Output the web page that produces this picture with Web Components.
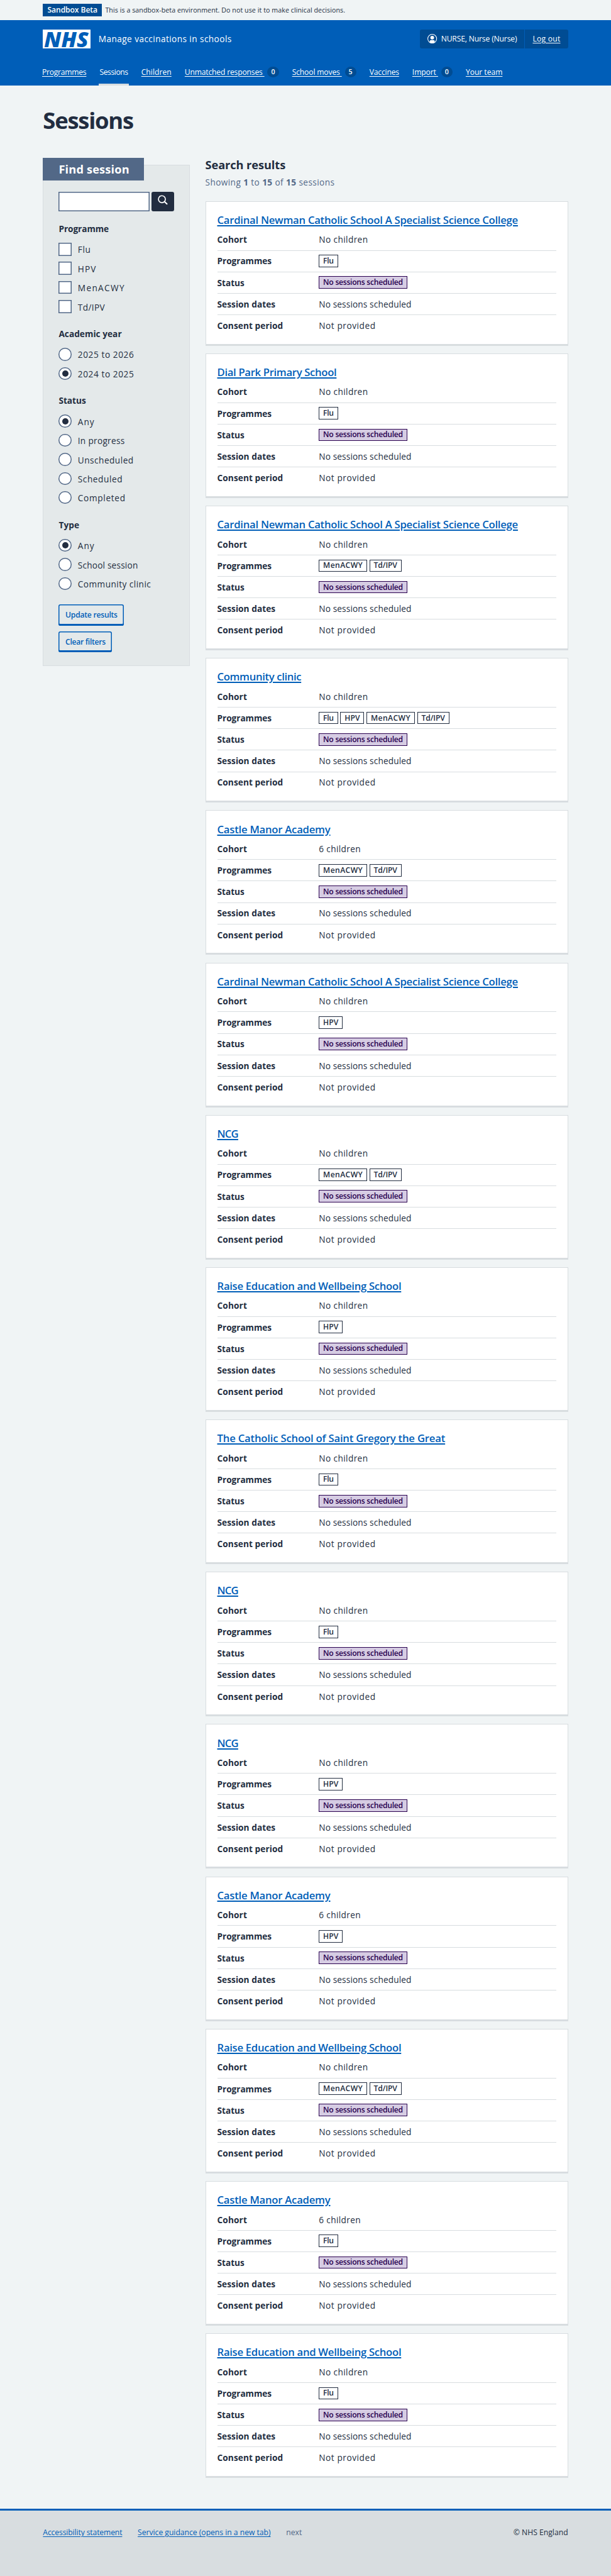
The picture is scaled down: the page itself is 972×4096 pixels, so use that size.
<!DOCTYPE html>
<html lang="en">
<head>
<meta charset="utf-8">
<title>Sessions – Manage vaccinations in schools</title>
<style>
/* 1rem is ten design pixels */
html{font-size:7.59375px;background:#d8dde0}
body{margin:0;background:#f0f4f5;color:#222d40;font-family:"Open Sans","Noto Sans",sans-serif;font-size:1.8rem;font-weight:500}
</style>
</head>
<body>
<sessions-page></sessions-page>
<script>
const UNIT = 0.759375;
const define = (name, css, html, setup) => customElements.define(name, class extends HTMLElement {
  connectedCallback() {
    if (this.shadowRoot) return;
    const t = document.createElement('template');
    t.innerHTML = `<style>*{box-sizing:border-box}a{color:inherit}b,h1,h2,h3{font-weight:700}${css}</style>` + (typeof html === 'function' ? html(this) : html);
    this.attachShadow({ mode: 'open' }).append(t.content.cloneNode(true));
    if (setup) setup(this);
  }
});

/* A run of text tracked so that it spans its design width */
define('text-run', ':host{display:inline-block;white-space:pre;text-decoration:inherit}span{display:inline-block;text-decoration:inherit;text-underline-offset:inherit}', '<span><slot></slot></span>', el => {
  const span = el.shadowRoot.querySelector('span');
  const target = el.getAttribute('w') * UNIT;
  span.style.letterSpacing = (target - span.getBoundingClientRect().width) / el.textContent.length + 'px';
});

define('env-banner', `
:host{display:block;height:4.2rem;padding:.8rem 9rem 0}
div{display:flex;align-items:baseline;line-height:2.6rem}
b{background:#004c93;color:#fff;font-size:1.6rem;font-weight:600;width:12.3rem;padding-left:.95rem;height:2.6rem}
p{margin:0 0 0 .75rem;font-size:1.4rem}`,
`<div><b><text-run w="104.5">Sandbox Beta</text-run></b><p><text-run w="502.5">This is a sandbox-beta environment. Do not use it to make clinical decisions.</text-run></p></div>`);

define('nhs-logo', `:host{display:flex;align-items:center;width:10rem;height:4rem;background:#fff;color:#005eb8;font:italic 800 4.5rem/6.2rem "Open Sans",sans-serif;padding-left:.25rem;box-sizing:border-box}
text-run{margin-top:-.2rem}`, `<text-run w="93">NHS</text-run>`);

define('account-box', `
:host{display:flex;width:31rem;height:4rem;background:#004c93;border-radius:.4rem;font-size:1.6rem;line-height:4rem;color:#fff}
.u{width:22rem;display:flex;padding-left:1.6rem;border-right:1px solid #005eb8}
svg{width:2rem;height:2rem;margin:.9rem .8rem 0 0}
.o{padding-left:1.6rem;text-decoration:underline;text-underline-offset:.25rem}`,
`<div class="u"><svg viewBox="0 0 20 20"><clipPath id="c"><circle cx="10" cy="10" r="9.5"/></clipPath><circle cx="10" cy="10" r="9.3" fill="none" stroke="#fff" stroke-width="1.4"/><circle cx="10" cy="7.7" r="3.9" fill="#fff"/><path clip-path="url(#c)" fill="#fff" d="M4.8 20v-4.5c0-1.7 1.2-2.8 2.9-2.8h4.6c1.7 0 2.9 1.1 2.9 2.8V20z"/></svg><text-run w="159">NURSE, Nurse (Nurse)</text-run></div><div class="o"><text-run w="58">Log out</text-run></div>`);

define('nav-item', `
:host{display:flex;align-items:center;height:5.6rem;position:relative}
a{text-decoration:underline;text-underline-offset:.22rem;line-height:2.6rem}
:host([current]) a{text-decoration:none}
:host([current])::after{content:"";position:absolute;left:-.18rem;right:-.16rem;bottom:0;height:.4rem;background:#d8dde0}
b{margin-left:.63rem;width:2.4rem;height:2.2rem;border-radius:50%;background:#004c93;font-size:1.4rem;font-weight:600;line-height:2.3rem;text-align:center}`,
el => `<a><text-run w="${el.getAttribute('w')}">${el.getAttribute('label')}${el.hasAttribute('count') ? ' ' : ''}</text-run></a>${el.hasAttribute('count') ? `<b>${el.getAttribute('count')}</b>` : ''}`);

define('site-header', `
:host{display:block;background:#005eb8;color:#fff;height:13.7rem;padding:2rem 9rem 0}
.top{display:flex;height:4rem;line-height:3.9rem}
.name{margin-left:1.65rem;flex:1}
nav{display:flex;gap:2.77rem;margin:2.1rem 0 0 -.18rem;font-size:1.6rem}`,
`<div class="top"><nhs-logo></nhs-logo><div class="name"><text-run w="279">Manage vaccinations in schools</text-run></div><account-box></account-box></div>
<nav><nav-item label="Programmes" w="92.7"></nav-item><nav-item label="Sessions" w="59.6" current></nav-item><nav-item label="Children" w="63.3"></nav-item><nav-item label="Unmatched responses" w="167" count="0"></nav-item><nav-item label="School moves" w="104.1" count="5"></nav-item><nav-item label="Vaccines" w="62"></nav-item><nav-item label="Import" w="54" count="0"></nav-item><nav-item label="Your team" w="77"></nav-item></nav>`);

define('choice-item', `
:host{display:flex;align-items:center;height:4rem}
i{width:2.7rem;height:2.7rem;margin:0 1.3rem 0 0;background:#fff;box-shadow:inset 0 0 0 .2rem #526887;display:grid;place-items:center}
:host([radio]) i{border-radius:50%}
:host([checked]) i::after{content:"";width:1.35rem;height:1.35rem;border-radius:50%;background:#222d40}
::slotted(*){margin-top:.15rem}`,
`<i></i><slot></slot>`);

define('choice-group', `:host{display:block;margin-top:2.27rem}h3{margin:0 0 .93rem;font-size:1.8rem;line-height:2.8rem}`,
el => `<h3><text-run w="${el.getAttribute('w')}">${el.getAttribute('label')}</text-run></h3><slot></slot>`);

define('outline-button', `:host{display:block;margin-bottom:1.2rem}
button{display:block;height:4.4rem;font-family:inherit;font-size:1.6rem;font-weight:600;color:#005eb8;background:none;border:0;border-radius:.4rem;box-shadow:inset 0 0 0 .2rem #005eb8,inset 0 -.4rem 0 #005eb8;padding:0 1.4rem .1rem;text-align:left}`,
`<button><slot></slot></button>`);

define('filter-panel', `
:host{display:block;box-sizing:border-box;width:30.8rem;height:105rem;margin-top:1.5rem;border:1px solid #d8dde0;background:#e4e9ea;padding-left:3.17rem}
h2{margin:calc(-1.5rem - 1px) 0 2.4rem calc(-3.17rem - 1px);width:21.2rem;height:4.8rem;line-height:4.8rem;padding-left:3.3rem;background:#526887;color:#fff;font-size:2.4rem}
.s{display:flex;gap:.4rem;height:4rem}
.s i{width:19rem;background:#fff;box-shadow:inset 0 0 0 .2rem #526887}
.s button{width:4.8rem;padding:0;border:0;border-radius:.4rem;background:#222d40;display:block}
svg{display:block;width:2.1rem;height:2.1rem;margin:-.55rem 0 0 1.3rem}
.b{margin-top:2.4rem}`,
() => {
  const item = (label, w, a) => `<choice-item ${a}><text-run w="${w}">${label}</text-run></choice-item>`;
  return `<h2><text-run w="148">Find session</text-run></h2>
<div class="s"><i></i><button><svg viewBox="0 0 21 21" fill="none" stroke="#fff" stroke-width="2.2"><circle cx="8.7" cy="8.9" r="7.3"/><path stroke-width="2.8" stroke-linecap="round" d="M14.2 14.1l4.9 4.6"/></svg></button></div>
<choice-group label="Programme" w="105">${item('Flu', 27.5, '')}${item('HPV', 39, '')}${item('MenACWY', 99, '')}${item('Td/IPV', 57, '')}</choice-group>
<choice-group label="Academic year" w="132">${item('2025 to 2026', 118, 'radio')}${item('2024 to 2025', 118, 'radio checked')}</choice-group>
<choice-group label="Status" w="57">${item('Any', 35.5, 'radio checked')}${item('In progress', 98.5, 'radio')}${item('Unscheduled', 117, 'radio')}${item('Scheduled', 94, 'radio')}${item('Completed', 100, 'radio')}</choice-group>
<choice-group label="Type" w="43">${item('Any', 35.5, 'radio checked')}${item('School session', 126, 'radio')}${item('Community clinic', 153.5, 'radio')}</choice-group>
<div class="b"><outline-button><text-run w="109">Update results</text-run></outline-button><outline-button><text-run w="84">Clear filters</text-run></outline-button></div>`;
});

define('tag-label', `:host{display:inline-flex;box-sizing:border-box;height:2.6rem;border:1px solid #222d40;font-size:1.6rem;font-weight:600;align-items:center;justify-content:center;width:var(--w);line-height:2.4rem}
:host([purple]){background:#d6cce3;color:#29004f;border-color:#29004f}`, '<slot></slot>',
el => el.style.setProperty('--w', el.getAttribute('w') / 10 + 'rem'));

define('summary-row', `:host{display:flex;align-items:center;box-sizing:border-box;height:4.5rem;border-bottom:1px solid #d8dde0;line-height:2.8rem}
:host([last]){border-bottom-color:transparent}
b{width:21.3rem}div{display:flex;gap:.5rem}`,
el => `<b><text-run w="${el.getAttribute('w')}">${el.getAttribute('label')}</text-run></b><div><slot></slot></div>`);

const tagWidths = { 'Flu': 40, 'HPV': 50, 'MenACWY': 101, 'Td/IPV': 67 };
define('session-card', `
:host{display:block;box-sizing:border-box;height:30.293rem;margin-bottom:1.6rem;background:#fff;border:1px solid #d8dde0;border-bottom-width:3px;padding:2.39rem 2.37rem 0}
h3{margin:0 0 .36rem;font-size:2.2rem;font-weight:600;line-height:3rem;color:#005eb8}
a{text-decoration:underline 1.5px;text-underline-offset:.24rem}`,
el => {
  const cohort = el.getAttribute('cohort');
  const tags = el.getAttribute('programmes').split(',').map(p => `<tag-label w="${tagWidths[p]}"><text-run w="${tagWidths[p] - 18}">${p}</text-run></tag-label>`).join('');
  return `<h3><a><text-run w="${el.getAttribute('w')}">${el.getAttribute('name')}</text-run></a></h3>
<summary-row label="Cohort" w="62.5"><text-run w="${cohort[0] === 'N' ? 103 : 88}">${cohort}</text-run></summary-row>
<summary-row label="Programmes" w="114">${tags}</summary-row>
<summary-row label="Status" w="57"><tag-label purple w="185"><text-run w="167">No sessions scheduled</text-run></tag-label></summary-row>
<summary-row label="Session dates" w="122"><text-run w="194">No sessions scheduled</text-run></summary-row>
<summary-row last label="Consent period" w="138"><text-run w="119">Not provided</text-run></summary-row>`;
});

const N = 'No children', S = '6 children';
const sessions = [
  ['Cardinal Newman Catholic School A Specialist Science College', 630, N, 'Flu'],
  ['Dial Park Primary School', 250, N, 'Flu'],
  ['Cardinal Newman Catholic School A Specialist Science College', 630, N, 'MenACWY,Td/IPV'],
  ['Community clinic', 176, N, 'Flu,HPV,MenACWY,Td/IPV'],
  ['Castle Manor Academy', 237, S, 'MenACWY,Td/IPV'],
  ['Cardinal Newman Catholic School A Specialist Science College', 630, N, 'HPV'],
  ['NCG', 44, N, 'MenACWY,Td/IPV'],
  ['Raise Education and Wellbeing School', 385.5, N, 'HPV'],
  ['The Catholic School of Saint Gregory the Great', 477.5, N, 'Flu'],
  ['NCG', 44, N, 'Flu'],
  ['NCG', 44, N, 'HPV'],
  ['Castle Manor Academy', 237, S, 'HPV'],
  ['Raise Education and Wellbeing School', 385.5, N, 'MenACWY,Td/IPV'],
  ['Castle Manor Academy', 237, S, 'Flu'],
  ['Raise Education and Wellbeing School', 385.5, N, 'Flu']
];

define('search-results', `:host{display:block;width:76rem}
h2{margin:.14rem 0 .83rem;font-size:2.4rem;line-height:2.8rem}
p{margin:0 0 2.53rem;line-height:2.8rem;color:#526887}`,
() => `<h2><text-run w="168">Search results</text-run></h2><p><text-run w="271">Showing <b>1</b> to <b>15</b> of <b>15</b> sessions</text-run></p>` +
  sessions.map(([name, w, cohort, p]) => `<session-card name="${name}" w="${w}" cohort="${cohort}" programmes="${p}"></session-card>`).join(''));

define('site-footer', `:host{display:flex;box-sizing:border-box;flex:1;border-top:3px solid #005eb8;background:#d8dde0;padding:3.4rem 9rem 0;font-size:1.6rem;line-height:2.4rem}
a{color:#005eb8;text-decoration:underline;text-underline-offset:.22rem;margin-right:3.25rem}
.n{color:#526887;flex:1}`,
`<a><text-run w="166">Accessibility statement</text-run></a><a><text-run w="278.5">Service guidance (opens in a new tab)</text-run></a><span class="n"><text-run w="33">next</text-run></span><text-run w="114.5">© NHS England</text-run>`);

define('sessions-page', `:host{display:flex;flex-direction:column;height:4096px}
main{height:507.4rem;padding:4.5rem 9rem 0;flex:none}
h1{margin:0 0 5rem;font-size:4.8rem;line-height:5.6rem}
.cols{display:flex;justify-content:space-between;align-items:flex-start}`,
`<env-banner></env-banner><site-header></site-header><main><h1><text-run w="189">Sessions</text-run></h1><div class="cols"><filter-panel></filter-panel><search-results></search-results></div></main><site-footer></site-footer>`);
</script>
</body>
</html>
